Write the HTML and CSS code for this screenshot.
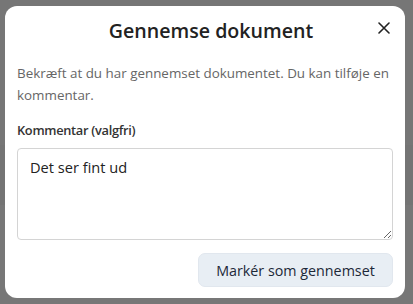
FILE: index.html
```html
<!DOCTYPE html>
<html lang="da">
<head>
<meta charset="utf-8">
<link rel="stylesheet" href="styles.css">
</head>
<body>
<div class="backdrop">
  <div class="dialog">
    <div class="header">
      <h1 class="title">Gennemse dokument</h1>
      <button class="close" aria-label="Luk">
        <svg width="12" height="12" viewBox="0 0 12 12"><path d="M1 1L11 11M11 1L1 11" stroke="#222" stroke-width="1.6" stroke-linecap="round"/></svg>
      </button>
    </div>
    <p class="desc">Bekræft at du har gennemset dokumentet. Du kan tilføje en kommentar.</p>
    <label class="label" for="c">Kommentar (valgfri)</label>
    <textarea id="c" class="comment">Det ser fint ud</textarea>
    <div class="actions">
      <button class="primary">Markér som gennemset</button>
    </div>
  </div>
</div>
</body>
</html>
```
FILE: styles.css
```css
html, body {
  margin: 0;
  height: 100%;
}
body {
  background: linear-gradient(to bottom, #767676 0, #767676 145px, #747474 145px, #747474 205px, #777777 205px, #777777 100%);
  font-family: "Open Sans", "Noto Sans", sans-serif;
}
.backdrop {
  padding: 6px 8px 6px 5px;
}
.dialog {
  width: 400px;
  height: 292px;
  box-sizing: border-box;
  background: #fff;
  border-radius: 12px;
  padding: 0 12px;
  display: flex;
  flex-direction: column;
}
.header {
  position: relative;
  height: 48px;
  display: flex;
  align-items: center;
  justify-content: center;
}
.title {
  margin: 0 0 0 12px;
  font-size: 19.6px;
  font-weight: 600;
  color: #222;
}
.close {
  position: absolute;
  right: 2px;
  top: 15px;
  width: 14px;
  height: 14px;
  padding: 0;
  border: 0;
  background: none;
  display: flex;
  align-items: center;
  justify-content: center;
}
.desc {
  margin: 8px 0 0;
  font-size: 13.4px;
  line-height: 22px;
  color: #666;
}
.label {
  margin-top: 15px;
  font-size: 12.8px;
  font-weight: 600;
  letter-spacing: -0.3px;
  color: #333;
  line-height: 18px;
}
.comment {
  margin-top: 9px;
  height: 92px;
  box-sizing: border-box;
  border: 1px solid #d4d4d4;
  border-radius: 4px;
  padding: 8px 12px;
  font-family: "Open Sans", "Noto Sans", sans-serif;
  font-size: 14.6px;
  line-height: 20px;
  color: #222;
  resize: vertical;
}
.actions {
  margin-top: 13px;
  display: flex;
  justify-content: flex-end;
}
.primary {
  height: 34px;
  width: 195px;
  border: 1px solid #e1e7ee;
  border-radius: 7px;
  background: #e8eef4;
  font-family: "Open Sans", "Noto Sans", sans-serif;
  font-size: 14.3px;
  font-weight: 500;
  color: #1c2838;
  padding: 0;
}
```
